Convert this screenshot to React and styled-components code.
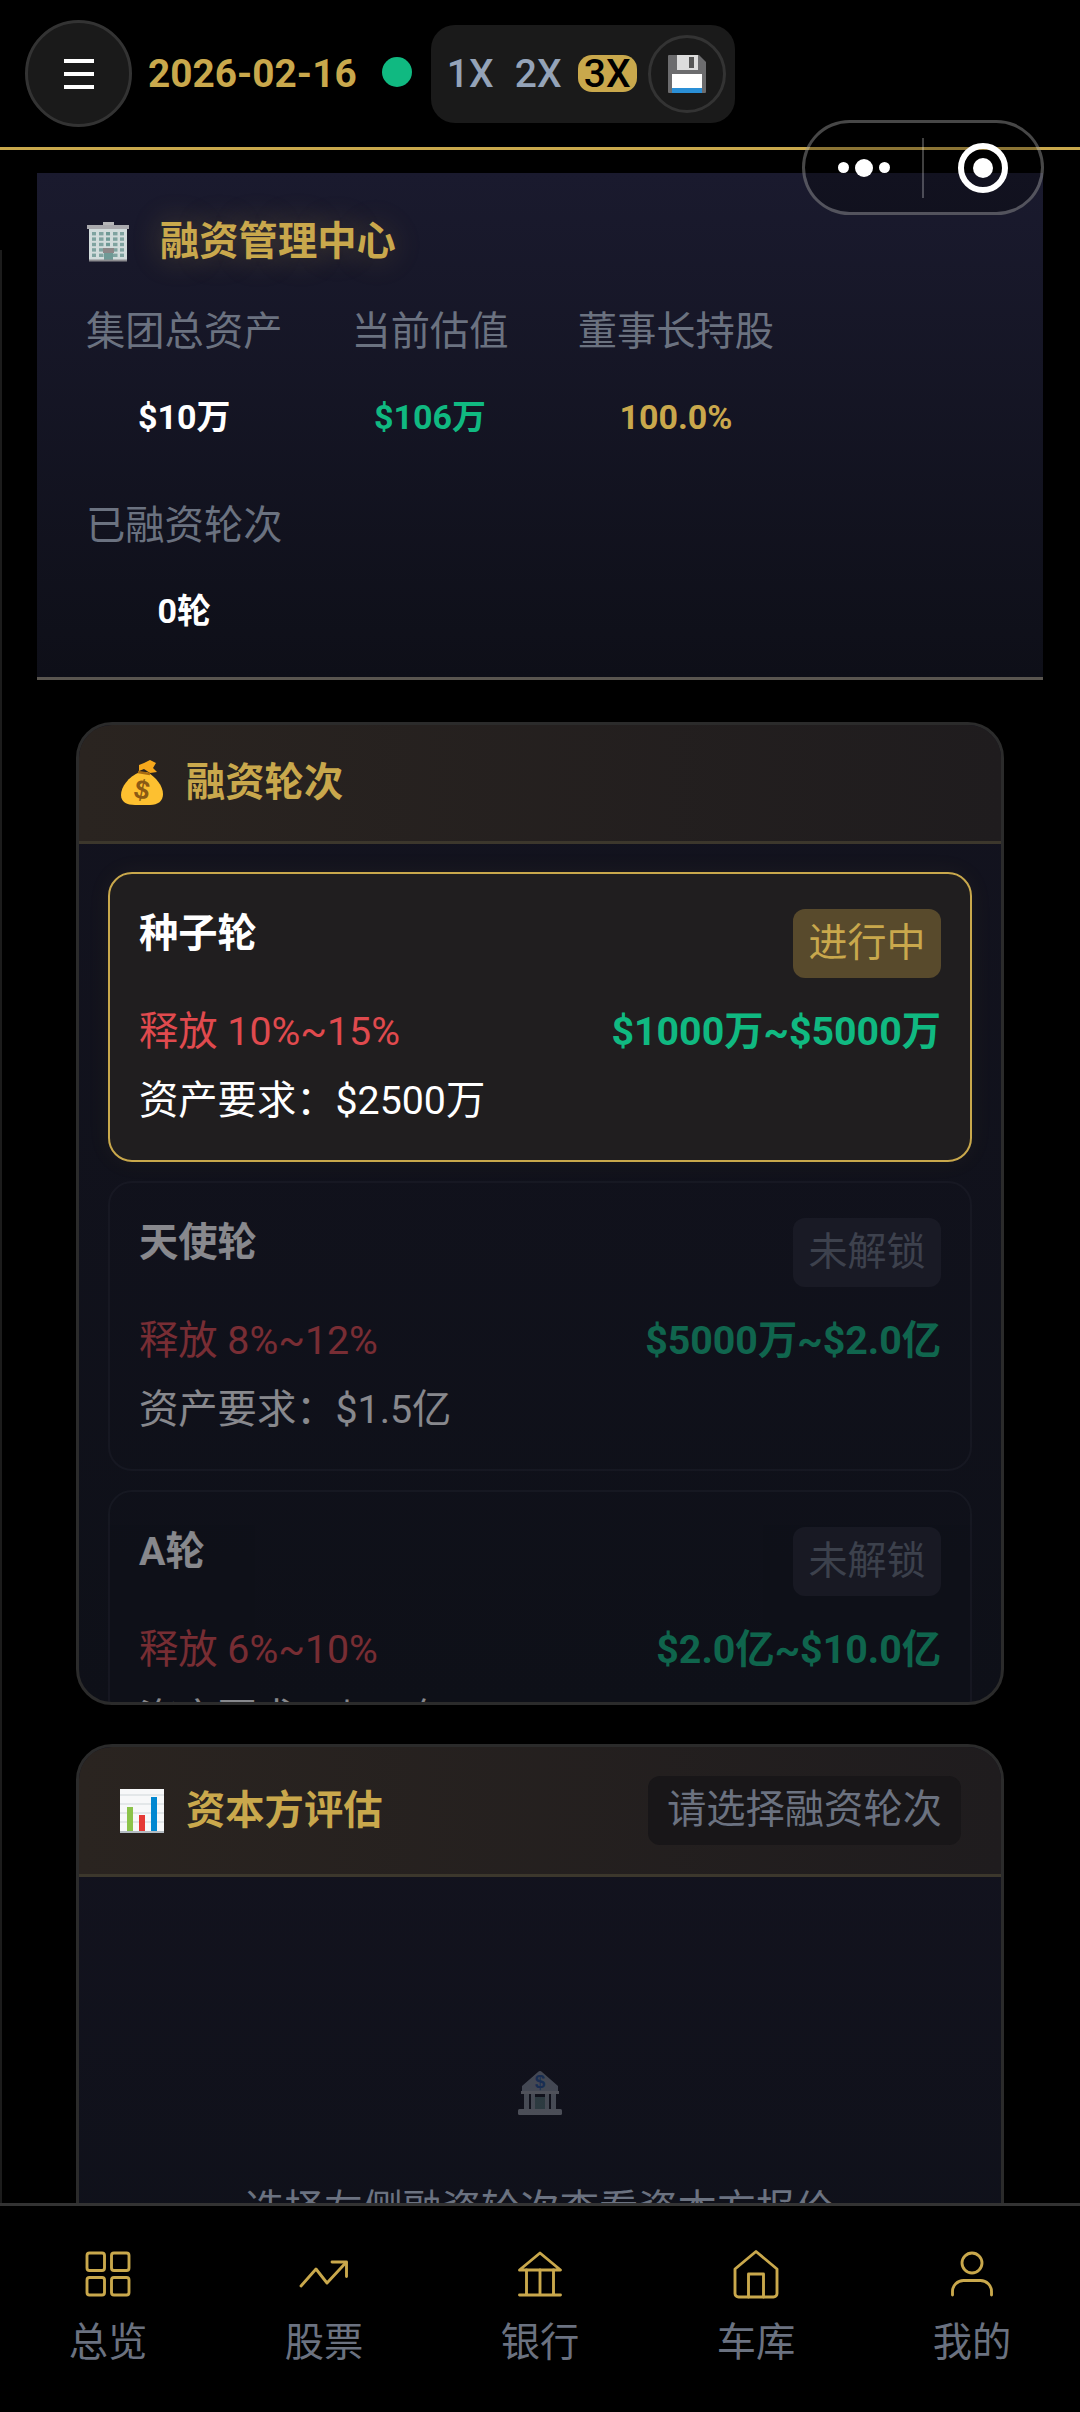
import React from "react";
import styled, { createGlobalStyle } from "styled-components";

const GOLD = "#c9a84c";
const GREEN = "#10b981";
const MUTED = "#6b7280";

const Global = createGlobalStyle`
  html, body { margin: 0; padding: 0; background: #000; }
  * { box-sizing: border-box; }
  #root { width: 1080px; height: 2412px; }
`;

const Page = styled.div`
  position: relative;
  width: 1080px;
  height: 2412px;
  overflow: hidden;
  display: flex;
  flex-direction: column;
  background: #000;
  font-family: Roboto, "Noto Sans CJK SC", sans-serif;
  color: #fff;
`;

const Header = styled.header`
  flex: 0 0 150px;
  display: flex;
  align-items: center;
  padding-left: 25px;
  border-bottom: 3px solid ${GOLD};
`;

const MenuButton = styled.div`
  width: 107px;
  height: 107px;
  border-radius: 50%;
  background: #1a1a1a;
  border: 3px solid #333;
  display: flex;
  flex-direction: column;
  align-items: center;
  justify-content: center;
  gap: 9px;
`;

const MenuBar = styled.span`
  width: 30px;
  height: 4px;
  background: #fff;
`;

const DateText = styled.span`
  margin-left: 16px;
  font-size: 38.8px;
  font-weight: 700;
  color: ${GOLD};
`;

const StatusDot = styled.span`
  width: 30px;
  height: 30px;
  margin: 0 0 3px 25px;
  border-radius: 50%;
  background: ${GREEN};
`;

const SpeedPill = styled.div`
  margin-left: 19px;
  width: 304px;
  height: 98px;
  border-radius: 24px;
  background: #1a1a1a;
  display: flex;
  align-items: center;
  gap: 11px;
  padding: 0 8px 0 11px;
`;

const SpeedOption = styled.span`
  width: ${(p) => (p.$active ? 59 : 57)}px;
  height: 37px;
  display: flex;
  align-items: center;
  justify-content: center;
  font-size: 39px;
  font-weight: 500;
  border-radius: 14px;
  color: ${(p) => (p.$active ? "#000" : "#94a3b8")};
  background: ${(p) => (p.$active ? GOLD : "transparent")};
`;

const SaveButton = styled.div`
  width: 78px;
  height: 78px;
  border-radius: 50%;
  border: 3px solid #333;
  display: flex;
  align-items: center;
  justify-content: center;
`;

const Capsule = styled.div`
  position: absolute;
  top: 120px;
  left: 802px;
  width: 242px;
  height: 95px;
  border-radius: 48px;
  border: 3px solid rgba(255, 255, 255, 0.28);
  background: rgba(0, 0, 0, 0.3);
  display: flex;
  align-items: center;
  z-index: 5;
`;

const CapsuleHalf = styled.div`
  flex: 1;
  height: 100%;
  display: flex;
  align-items: center;
  justify-content: center;
  gap: 6px;
`;

const CapsuleDivider = styled.span`
  width: 2px;
  height: 60px;
  background: rgba(255, 255, 255, 0.25);
`;

const CapsuleDot = styled.span`
  width: ${(p) => p.$size}px;
  height: ${(p) => p.$size}px;
  border-radius: 50%;
  background: #fff;
`;

const CapsuleTarget = styled.span`
  width: 50px;
  height: 50px;
  border-radius: 50%;
  border: 6px solid #fff;
  display: flex;
  align-items: center;
  justify-content: center;
  &::after {
    content: "";
    width: 20px;
    height: 20px;
    border-radius: 50%;
    background: #fff;
  }
`;

const Main = styled.main`
  position: relative;
  flex: 1;
  min-height: 0;
  overflow: hidden;
  &::before {
    content: "";
    position: absolute;
    left: 0;
    top: 100px;
    bottom: 0;
    width: 2px;
    background: #1c1c1c;
  }
`;

const Overview = styled.section`
  margin: 23px 37px 0;
  width: 1006px;
  height: 507px;
  padding: 41px 49px 41px;
  background: linear-gradient(180deg, #1a1a2e 0%, #0e0f18 100%);
  border-bottom: 3px solid #5a5650;
`;

const OverviewTitle = styled.h1`
  margin: 0;
  height: 56px;
  display: flex;
  align-items: center;
  gap: 30px;
  font-size: 39.3px;
  line-height: 56px;
  font-weight: 700;
  color: ${GOLD};
  text-shadow: 0 0 30px rgba(201, 168, 76, 0.3);
`;

const StatGrid = styled.div`
  margin-top: 34px;
  display: flex;
  flex-wrap: wrap;
  column-gap: 69px;
  row-gap: 57px;
`;

const Stat = styled.div`
  display: flex;
  flex-direction: column;
  align-items: center;
`;

const StatLabel = styled.span`
  font-size: 39.3px;
  line-height: 56px;
  color: ${MUTED};
`;

const StatValue = styled.span`
  margin-top: 33px;
  font-size: 34px;
  line-height: 48px;
  font-weight: 700;
  color: ${(p) => p.$color || "#fff"};
`;

const Panel = styled.section`
  margin: ${(p) => p.$top}px 0 0 76px;
  width: 928px;
  height: ${(p) => p.$height}px;
  border: 3px solid #2b2b2b;
  border-radius: 36px;
  overflow: hidden;
  background: linear-gradient(180deg, #13131f 0%, #0e1018 100%);
  display: flex;
  flex-direction: column;
`;

const PanelHeader = styled.div`
  flex: 0 0 auto;
  display: flex;
  align-items: center;
  justify-content: space-between;
  padding: ${(p) => p.$pad}px 40px ${(p) => p.$pad}px 41px;
  background: linear-gradient(90deg, #2a2420 0%, #1f1c1e 100%);
  border-bottom: 3px solid #3c372c;
`;

const PanelTitle = styled.h2`
  margin: 0;
  display: flex;
  align-items: center;
  gap: 22px;
  font-size: 39.3px;
  line-height: 56px;
  font-weight: 700;
  color: ${GOLD};
`;

const HintTag = styled.span`
  height: 69px;
  padding: 0 19px;
  border-radius: 12px;
  background: #181618;
  color: ${MUTED};
  font-size: 39.3px;
  line-height: 69px;
`;

const RoundList = styled.div`
  flex: 1;
  min-height: 0;
  overflow: hidden;
  padding: 28px 29px 0;
  display: flex;
  flex-direction: column;
  gap: 19px;
`;

const RoundCard = styled.article`
  flex: 0 0 290px;
  padding: 35px 29px 29px;
  border-radius: 24px;
  border: 2px solid ${(p) => (p.$active ? GOLD : "#1e1f2a")};
  background: ${(p) => (p.$active ? "#201e1f" : "transparent")};
  box-shadow: ${(p) => (p.$active ? "0 0 24px rgba(201,168,76,0.06)" : "none")};
  opacity: ${(p) => (p.$active ? 1 : 0.5)};
`;

const RoundTop = styled.div`
  display: flex;
  justify-content: space-between;
  align-items: flex-start;
`;

const RoundName = styled.span`
  font-size: 39.3px;
  line-height: 51px;
  font-weight: 700;
`;

const RoundTag = styled.span`
  width: 148px;
  height: 69px;
  border-radius: 12px;
  text-align: center;
  font-size: 39px;
  line-height: 69px;
  color: ${(p) => (p.$active ? GOLD : MUTED)};
  background: ${(p) => (p.$active ? "#584a2c" : "#22232f")};
`;

const RoundStats = styled.div`
  margin-top: 19px;
  display: flex;
  justify-content: space-between;
  align-items: center;
  height: 60px;
`;

const Release = styled.span`
  font-size: 39.3px;
  color: #e04a4e;
`;

const Amount = styled.span`
  font-size: 39.3px;
  font-weight: 700;
  color: ${GREEN};
`;

const Requirement = styled.div`
  margin-top: 14px;
  font-size: 39.3px;
  line-height: 60px;
`;

const EmptyState = styled.div`
  padding-top: 194px;
  display: flex;
  flex-direction: column;
  align-items: center;
  gap: 67px;
`;

const EmptyIcon = styled.div`
  opacity: 0.3;
  height: 44px;
`;

const EmptyText = styled.p`
  margin: 0;
  font-size: 39.3px;
  line-height: 56px;
  color: ${MUTED};
`;

const Nav = styled.nav`
  flex: 0 0 209px;
  display: grid;
  grid-template-columns: repeat(5, 216px);
  padding-top: 38px;
  background: #000;
  border-top: 3px solid #333;
  position: relative;
  z-index: 2;
`;

const NavItem = styled.div`
  display: flex;
  flex-direction: column;
  align-items: center;
  gap: 11px;
  color: ${GOLD};
`;

const NavLabel = styled.span`
  font-size: 39.3px;
  line-height: 56px;
  color: ${MUTED};
`;

const Icon = ({ children }) => (
  <svg width="60" height="60" viewBox="0 0 24 24" fill="none" stroke="currentColor" strokeWidth="1.15" strokeLinecap="round" strokeLinejoin="round">
    {children}
  </svg>
);

const NAV = [
  ["总览", <><rect x="3.6" y="3.6" width="7" height="7" rx="1" /><rect x="13.4" y="3.6" width="7" height="7" rx="1" /><rect x="3.6" y="13.4" width="7" height="7" rx="1" /><rect x="13.4" y="13.4" width="7" height="7" rx="1" /></>],
  ["股票", <><path d="M2.8 16.8 8.8 10l4.4 5.6 7.6-8.2" /><path d="M15.2 7.2h5.8v5.8" /></>],
  ["银行", <><path d="M12 3.6 3.8 10.4h16.4L12 3.6Z" /><path d="M6.6 10.4v10M12 10.4v10M17.4 10.4v10M3.8 20.4h16.4" /></>],
  ["车库", <><path d="M3.6 10 12 3l8.4 7v9.8a1.4 1.4 0 0 1-1.4 1.4H5a1.4 1.4 0 0 1-1.4-1.4V10Z" /><path d="M9 21.2V12h6v9.2" /></>],
  ["我的", <><circle cx="12" cy="7.6" r="4" /><path d="M4.2 20.4V19a4.4 4.4 0 0 1 4.4-4.4h6.8a4.4 4.4 0 0 1 4.4 4.4v1.4" /></>],
];

const BuildingEmoji = () => {
  const cells = [];
  for (let r = 0; r < 5; r++) {
    for (let c = 0; c < 5; c++) {
      if (r >= 3 && c === 2) continue;
      cells.push(<rect key={`${r}-${c}`} x={6 + c * 7} y={10 + r * 5.4} width={c === 1 || c === 3 ? 4.5 : 4} height="3.4" fill={c === 2 ? "#6f9a96" : "#7fa3a0"} />);
    }
  }
  return (
    <svg width="44" height="40" viewBox="0 0 44 40">
      <rect x="17" y="0" width="11" height="4" fill="#b6b6b8" />
      <rect x="3" y="6" width="38" height="33" fill="#d2dcdc" />
      <rect x="1" y="3" width="42" height="4" fill="#a9a9ad" />
      {cells}
      <rect x="17" y="26" width="11" height="5" fill="#8c8788" />
      <rect x="18" y="31" width="9" height="8" fill="#6f9a96" />
      <rect x="3" y="37.5" width="38" height="2" fill="#8c8c90" />
    </svg>
  );
};

const BagEmoji = () => (
  <svg width="44" height="46" viewBox="0 0 44 46">
    <path d="M20 12 C8 17 1 27 1 35 C1 42 7 45 15 45 H30 C38 45 43 41 43 34 C43 26 36 17 27 12 Z" fill="#fdc030" />
    <path d="M19 5 L24 3 L30 0 L36 3 L33 8 L37 12 L30 13 L24 9 L19 11 Z" fill="#f6a81c" />
    <path d="M18 12 L30 14" stroke="#a86a10" strokeWidth="2.4" />
    <text x="22" y="39" textAnchor="middle" fontFamily="'Liberation Sans', sans-serif" fontWeight="700" fontSize="27" fill="#8a5a14" transform="rotate(12 22 30)">$</text>
  </svg>
);

const ChartEmoji = () => (
  <svg width="44" height="44" viewBox="0 0 44 44">
    <rect x="0" y="0" width="44" height="44" fill="#f7f8f9" />
    <path d="M0 6h44M0 15h44M0 24h44M0 33h44" stroke="#d0d5d9" strokeWidth="1.2" />
    <rect x="7" y="18" width="6" height="25" fill="#8bc34a" />
    <rect x="19" y="26" width="6" height="17" fill="#e53935" />
    <rect x="31" y="8" width="6" height="35" fill="#0288d1" />
    <rect x="0" y="42" width="44" height="2" fill="#b4bcc2" />
  </svg>
);

const BankEmoji = () => (
  <svg width="44" height="44" viewBox="0 0 44 44">
    <path d="M22 0 Q23 0 24 1 L40 15 V20 H4 V15 L20 1 Q21 0 22 0 Z" fill="#b9c6d6" />
    <text x="22" y="17" textAnchor="middle" fontFamily="'Liberation Sans', sans-serif" fontWeight="700" fontSize="19" fill="#2d6fd0">$</text>
    <rect x="3" y="20" width="38" height="3" fill="#e2e6ea" />
    <rect x="6" y="23" width="5" height="15" fill="#c4ced8" />
    <rect x="13" y="23" width="4" height="15" fill="#c4ced8" />
    <rect x="17" y="26" width="10" height="12" fill="#6f9a96" />
    <rect x="27" y="23" width="4" height="15" fill="#c4ced8" />
    <rect x="33" y="23" width="5" height="15" fill="#c4ced8" />
    <rect x="0" y="38" width="44" height="6" rx="1.5" fill="#d3dae2" />
  </svg>
);

const FloppyEmoji = () => (
  <svg width="38" height="38" viewBox="0 0 38 38">
    <path d="M0 1 a1 1 0 0 1 1-1 H31 L38 7 V37 a1 1 0 0 1-1 1 H1 a1 1 0 0 1-1-1 Z" fill="#6c6c6e" />
    <rect x="9" y="0" width="21" height="15" fill="#dcdcdc" />
    <rect x="21" y="2" width="5" height="11" fill="#555" />
    <rect x="4" y="19" width="30" height="19" fill="#fff" />
    <rect x="4" y="33" width="30" height="5" fill="#2a8fd6" />
  </svg>
);

const ROUNDS = [
  { name: "种子轮", tag: "进行中", release: "释放 10%~15%", amount: "$1000万~$5000万", req: "资产要求：$2500万", active: true },
  { name: "天使轮", tag: "未解锁", release: "释放 8%~12%", amount: "$5000万~$2.0亿", req: "资产要求：$1.5亿" },
  { name: "A轮", tag: "未解锁", release: "释放 6%~10%", amount: "$2.0亿~$10.0亿", req: "资产要求：$5.0亿" },
];

const STATS = [
  ["集团总资产", "$10万"],
  ["当前估值", "$106万", GREEN],
  ["董事长持股", "100.0%", GOLD],
  ["已融资轮次", "0轮"],
];

export default function App() {
  return (
    <Page>
      <Global />
      <Header>
        <MenuButton>
          <MenuBar />
          <MenuBar />
          <MenuBar />
        </MenuButton>
        <DateText>2026-02-16</DateText>
        <StatusDot />
        <SpeedPill>
          <SpeedOption>1X</SpeedOption>
          <SpeedOption>2X</SpeedOption>
          <SpeedOption $active>3X</SpeedOption>
          <SaveButton>
            <FloppyEmoji />
          </SaveButton>
        </SpeedPill>
      </Header>
      <Capsule>
        <CapsuleHalf>
          <CapsuleDot $size={11} />
          <CapsuleDot $size={18} />
          <CapsuleDot $size={11} />
        </CapsuleHalf>
        <CapsuleDivider />
        <CapsuleHalf>
          <CapsuleTarget />
        </CapsuleHalf>
      </Capsule>
      <Main>
        <Overview>
          <OverviewTitle>
            <BuildingEmoji />
            融资管理中心
          </OverviewTitle>
          <StatGrid>
            {STATS.map(([label, value, color]) => (
              <Stat key={label}>
                <StatLabel>{label}</StatLabel>
                <StatValue $color={color}>{value}</StatValue>
              </Stat>
            ))}
          </StatGrid>
        </Overview>
        <Panel $top={42} $height={983}>
          <PanelHeader $pad={30}>
            <PanelTitle>
              <BagEmoji />
              融资轮次
            </PanelTitle>
          </PanelHeader>
          <RoundList>
            {ROUNDS.map((r) => (
              <RoundCard key={r.name} $active={r.active}>
                <RoundTop>
                  <RoundName>{r.name}</RoundName>
                  <RoundTag $active={r.active}>{r.tag}</RoundTag>
                </RoundTop>
                <RoundStats>
                  <Release>{r.release}</Release>
                  <Amount>{r.amount}</Amount>
                </RoundStats>
                <Requirement>{r.req}</Requirement>
              </RoundCard>
            ))}
          </RoundList>
        </Panel>
        <Panel $top={39} $height={700}>
          <PanelHeader $pad={29}>
            <PanelTitle>
              <ChartEmoji />
              资本方评估
            </PanelTitle>
            <HintTag>请选择融资轮次</HintTag>
          </PanelHeader>
          <EmptyState>
            <EmptyIcon>
              <BankEmoji />
            </EmptyIcon>
            <EmptyText>选择左侧融资轮次查看资本方报价</EmptyText>
          </EmptyState>
        </Panel>
      </Main>
      <Nav>
        {NAV.map(([label, icon]) => (
          <NavItem key={label}>
            <Icon>{icon}</Icon>
            <NavLabel>{label}</NavLabel>
          </NavItem>
        ))}
      </Nav>
    </Page>
  );
}
